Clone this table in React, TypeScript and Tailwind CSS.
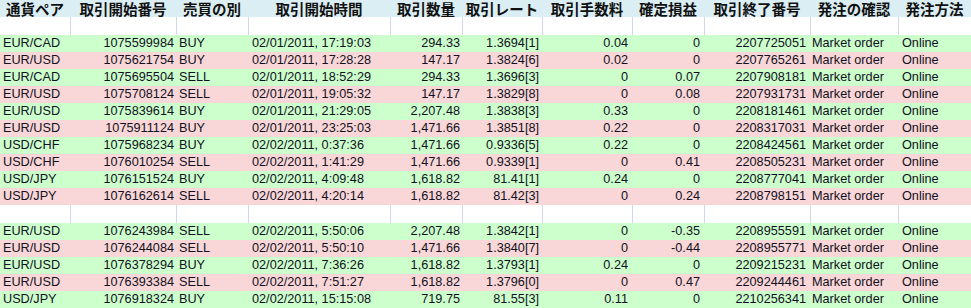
type Trade = [string, string, string, string, string, string, string, string, string];

const cols = [70, 106, 72, 142, 72, 80, 90, 72, 106, 88, 73];

const headers = ["通貨ペア", "取引開始番号", "売買の別", "取引開始時間", "取引数量", "取引レート", "取引手数料", "確定損益", "取引終了番号", "発注の確認", "発注方法"];

const groupA: Trade[] = [
  ["EUR/CAD", "1075599984", "BUY", "02/01/2011, 17:19:03", "294.33", "1.3694[1]", "0.04", "0", "2207725051"],
  ["EUR/USD", "1075621754", "BUY", "02/01/2011, 17:28:28", "147.17", "1.3824[6]", "0.02", "0", "2207765261"],
  ["EUR/CAD", "1075695504", "SELL", "02/01/2011, 18:52:29", "294.33", "1.3696[3]", "0", "0.07", "2207908181"],
  ["EUR/USD", "1075708124", "SELL", "02/01/2011, 19:05:32", "147.17", "1.3829[8]", "0", "0.08", "2207931731"],
  ["EUR/USD", "1075839614", "BUY", "02/01/2011, 21:29:05", "2,207.48", "1.3838[3]", "0.33", "0", "2208181461"],
  ["EUR/USD", "1075911124", "BUY", "02/01/2011, 23:25:03", "1,471.66", "1.3851[8]", "0.22", "0", "2208317031"],
  ["USD/CHF", "1075968234", "BUY", "02/02/2011, 0:37:36", "1,471.66", "0.9336[5]", "0.22", "0", "2208424561"],
  ["USD/CHF", "1076010254", "SELL", "02/02/2011, 1:41:29", "1,471.66", "0.9339[1]", "0", "0.41", "2208505231"],
  ["USD/JPY", "1076151524", "BUY", "02/02/2011, 4:09:48", "1,618.82", "81.41[1]", "0.24", "0", "2208777041"],
  ["USD/JPY", "1076162614", "SELL", "02/02/2011, 4:20:14", "1,618.82", "81.42[3]", "0", "0.24", "2208798151"],
];

const groupB: Trade[] = [
  ["EUR/USD", "1076243984", "SELL", "02/02/2011, 5:50:06", "2,207.48", "1.3842[1]", "0", "-0.35", "2208955591"],
  ["EUR/USD", "1076244084", "SELL", "02/02/2011, 5:50:10", "1,471.66", "1.3840[7]", "0", "-0.44", "2208955771"],
  ["EUR/USD", "1076378294", "BUY", "02/02/2011, 7:36:26", "1,618.82", "1.3793[1]", "0.24", "0", "2209215231"],
  ["EUR/USD", "1076393384", "SELL", "02/02/2011, 7:51:27", "1,618.82", "1.3796[0]", "0", "0.47", "2209244461"],
  ["USD/JPY", "1076918324", "BUY", "02/02/2011, 15:15:08", "719.75", "81.55[3]", "0.11", "0", "2210256341"],
];

function BlankRow() {
  return (
    <tr className="h-[18px] bg-white">
      {cols.map((_, i) => (
        <td key={i} className={i === 0 ? "p-0" : "p-0 border-l border-[#d0d7e5]"} />
      ))}
    </tr>
  );
}

function TradeRow({ t, idx }: { t: Trade; idx: number }) {
  const bg = idx % 2 === 0 ? "bg-[#ccffcc]" : "bg-[#f9d6d7]";
  return (
    <tr className={`h-[17px] ${bg}`}>
      <td className="pl-[3px] text-left">{t[0]}</td>
      <td className="pr-[2px] text-right">{t[1]}</td>
      <td className="pl-[3px] text-left">{t[2]}</td>
      <td className="pl-[4px] text-left">{t[3]}</td>
      <td className="pr-[2px] text-right">{t[4]}</td>
      <td className="pr-[3px] text-right">{t[5]}</td>
      <td className="pr-[4px] text-right">{t[6]}</td>
      <td className="pr-[4px] text-right">{t[7]}</td>
      <td className="pr-[4px] text-right">{t[8]}</td>
      <td className="pl-[2px] text-left">Market order</td>
      <td className="pl-[4px] text-left">Online</td>
    </tr>
  );
}

export default function App() {
  return (
    <div className="w-[971px] h-[308px] overflow-hidden bg-white">
      <table className="table-fixed border-collapse w-[971px] text-[12.7px] leading-[17px] text-[#111122] font-['Liberation_Sans',Arial,sans-serif]">
        <colgroup>
          {cols.map((w, i) => (
            <col key={i} style={{ width: w }} />
          ))}
        </colgroup>
        <thead>
          <tr className="h-[17px] bg-[#dbeef4]">
            {headers.map((h) => (
              <th key={h} className="p-0 text-center font-bold text-[14.5px] leading-[17px] text-[#111] font-['Noto_Sans_CJK_JP',sans-serif] whitespace-nowrap">
                {h}
              </th>
            ))}
          </tr>
        </thead>
        <tbody className="whitespace-nowrap">
          <BlankRow />
          {groupA.map((t, i) => (
            <TradeRow key={t[1]} t={t} idx={i} />
          ))}
          <BlankRow />
          {groupB.map((t, i) => (
            <TradeRow key={t[1]} t={t} idx={i} />
          ))}
        </tbody>
      </table>
    </div>
  );
}
